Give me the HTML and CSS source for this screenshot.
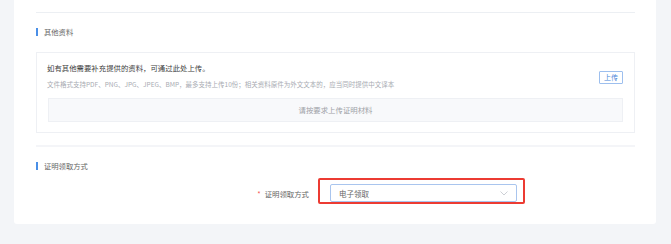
FILE: index.html
```html
<!DOCTYPE html>
<html lang="zh-CN">
<head>
    <meta charset="UTF-8">
    <title>证明材料</title>
    <link rel="stylesheet" href="styles.css">
</head>
<body>
    <div class="page">
        <div class="card">
            <div class="top-line"></div>

            <!-- 其他资料 -->
            <div class="section-title">其他资料</div>
            <div class="upload-box">
                <div class="upload-head">
                    <div>
                        <p class="upload-title">如有其他需要补充提供的资料，可通过此处上传。</p>
                        <p class="upload-hint">文件格式支持PDF、PNG、JPG、JPEG、BMP，最多支持上传10份；相关资料原件为外文文本的，应当同时提供中文译本</p>
                    </div>
                    <button class="upload-btn">上传</button>
                </div>
                <div class="dropzone">请按要求上传证明材料</div>
            </div>

            <div class="divider"></div>

            <!-- 证明领取方式 -->
            <div class="section-title">证明领取方式</div>
            <div class="form-row">
                <label class="form-label"><span class="required">*</span>证明领取方式</label>
                <div class="select">
                    <span>电子领取</span>
                    <svg class="chevron" width="8" height="5" viewBox="0 0 8 5">
                        <polyline points="0.5,0.5 4,4 7.5,0.5" fill="none" stroke="#c0c4cc" stroke-width="0.8"/>
                    </svg>
                    <div class="highlight"></div>
                </div>
            </div>
        </div>
    </div>
</body>
</html>
```

FILE: styles.css
```css
body {
    margin: 0;
    padding: 0;
    background-color: #f3f5f8;
    font-family: "Noto Sans CJK SC", "Noto Sans", sans-serif;
    color: #333333;
}

p {
    margin: 0;
}

.page {
    padding: 0 15px 20px 14px;
}

.card {
    background-color: #ffffff;
    border-radius: 0 0 3px 3px;
    padding: 0 21px 22px 22px;
}

.top-line {
    height: 12px;
    border-bottom: 1px solid #eceff3;
}

.section-title {
    margin-top: 13px;
    height: 12px;
    line-height: 12px;
    font-size: 7.3px;
    color: #666666;
    display: flex;
    align-items: center;
}

.section-title::before {
    content: "";
    width: 2px;
    height: 8px;
    background-color: #4a8fe7;
    margin-right: 6px;
}

.upload-box {
    margin-top: 14px;
    border: 1px solid #eef0f4;
    padding: 9px 11px 10px 10px;
}

.upload-head {
    display: flex;
    justify-content: space-between;
    align-items: center;
}

.upload-title {
    font-size: 7.4px;
    line-height: 12px;
    color: #3d3d3d;
}

.upload-hint {
    margin-top: 5px;
    font-size: 6.5px;
    line-height: 10px;
    color: #a8abb2;
}

.upload-btn {
    width: 24px;
    height: 13px;
    padding: 0;
    border: 1px solid #9dbfee;
    border-radius: 1px;
    background-color: #ffffff;
    color: #4a85d8;
    font-family: "Noto Sans CJK SC", sans-serif;
    font-size: 7px;
    line-height: 11px;
    margin-top: 3px;
}

.dropzone {
    margin-top: 9px;
    margin-left: 1px;
    height: 22px;
    line-height: 22px;
    border: 1px solid #eef0f4;
    background-color: #f8f9fb;
    text-align: center;
    font-size: 7.4px;
    color: #9fa2a8;
}

.divider {
    margin-top: 12px;
    height: 2px;
    background-color: #f4f5f8;
}

.form-row {
    margin-top: 12px;
    display: flex;
    align-items: center;
}

.form-label {
    width: 273px;
    text-align: right;
    font-size: 7.4px;
    color: #666666;
    margin-right: 21px;
}

.required {
    color: #f5564e;
    margin-right: 4px;
}

.select {
    position: relative;
    width: 187px;
    height: 18px;
    box-sizing: border-box;
    border: 1px solid #a9c5ee;
    border-radius: 2px;
    padding: 0 8px;
    display: flex;
    align-items: center;
    justify-content: space-between;
    font-size: 7.5px;
    color: #666666;
}

.chevron {
    display: block;
}

/* red annotation frame around the select */
.highlight {
    position: absolute;
    top: -7px;
    left: -13px;
    right: -9px;
    bottom: -3px;
    border: 2px solid #ec3b32;
    border-radius: 2px;
}
```
